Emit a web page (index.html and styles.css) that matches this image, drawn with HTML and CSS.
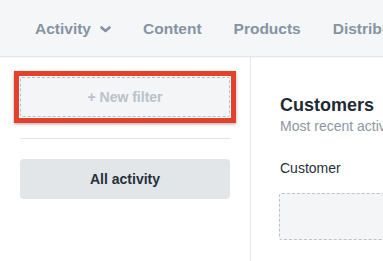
FILE: index.html
```html
<!DOCTYPE html>
<html lang="en">
<head>
    <meta charset="UTF-8">
    <title>Activity</title>
    <link rel="stylesheet" href="styles.css">
</head>
<body>
    <header class="topbar">
        <nav class="nav">
            <a class="nav-item">Activity
                <svg class="chevron" width="11" height="7" viewBox="0 0 11 7"><path d="M1.5 1.5 L5.5 5 L9.5 1.5" fill="none" stroke="currentColor" stroke-width="2.6" stroke-linecap="round" stroke-linejoin="round"/></svg>
            </a>
            <a class="nav-item">Content</a>
            <a class="nav-item">Products</a>
            <a class="nav-item">Distribution</a>
        </nav>
    </header>

    <div class="layout">
        <aside class="sidebar">
            <!-- highlighted filter button -->
            <div class="highlight">
                <button class="btn-new-filter">+ New filter</button>
            </div>
            <hr class="divider">
            <button class="btn-all">All activity</button>
        </aside>

        <main class="content">
            <h1 class="title">Customers</h1>
            <p class="subtitle">Most recent activity from your customers</p>
            <div class="field-label">Customer</div>
            <div class="dropzone"></div>
        </main>
    </div>
</body>
</html>
```

FILE: styles.css
```css
* {
    margin: 0;
    padding: 0;
    box-sizing: border-box;
}

html, body {
    height: 100%;
    overflow: hidden;
}

body {
    background: #fff;
    font-family: "Liberation Sans", Arial, sans-serif;
    color: #26313b;
    display: flex;
    flex-direction: column;
}

.topbar {
    height: 57px;
    flex: none;
    background: #f5f6f8;
    border-bottom: 1px solid #e4e7ea;
    box-shadow: 0 1px 2px rgba(0, 0, 0, 0.04);
    display: flex;
    align-items: center;
    padding: 2px 0 0 35px;
    white-space: nowrap;
    overflow: hidden;
}

.nav {
    display: flex;
    align-items: center;
    gap: 32px;
}

.nav-item {
    font-size: 15.5px;
    font-weight: bold;
    color: #8594a3;
    display: flex;
    align-items: center;
    gap: 9px;
}

.chevron {
    display: block;
    margin-top: 1px;
}

.layout {
    flex: 1;
    display: flex;
}

.sidebar {
    width: 251px;
    flex: none;
    border-right: 1px solid #e6e8eb;
    padding: 14px 20px 0 20px;
}

.highlight {
    margin: 0 -6px;
    border: 5px solid #e5402b;
    padding: 1px;
    box-shadow: 0 1px 3px rgba(0, 0, 0, 0.35);
}

.btn-new-filter {
    display: block;
    width: 100%;
    height: 40px;
    background: #f4f5f7;
    border: 1px dashed #b7bfc7;
    border-radius: 2px;
    font-family: inherit;
    font-size: 14px;
    font-weight: bold;
    color: #bac2ca;
}

.divider {
    border: none;
    border-top: 1px solid #e2e5e8;
    margin-top: 15px;
}

.btn-all {
    display: block;
    width: 100%;
    height: 40px;
    margin-top: 20px;
    background: #e3e6e8;
    border: none;
    border-radius: 4px;
    font-family: inherit;
    font-size: 14px;
    font-weight: bold;
    color: #25303a;
}

.content {
    flex: 1;
    padding: 37px 0 0 29px;
    white-space: nowrap;
    overflow: hidden;
}

.title {
    font-size: 18px;
    font-weight: bold;
    color: #1f2a35;
    line-height: 22px;
}

.subtitle {
    font-size: 14px;
    color: #8b97a3;
    line-height: 17px;
    margin-top: 2px;
}

.field-label {
    font-size: 14px;
    color: #26313b;
    margin-top: 25px;
    line-height: 17px;
}

.dropzone {
    margin-top: 16px;
    margin-left: -1px;
    width: 200px;
    height: 47px;
    background: #f4f5f7;
    border: 1px dashed #bcc3ca;
    border-radius: 3px;
}
```
